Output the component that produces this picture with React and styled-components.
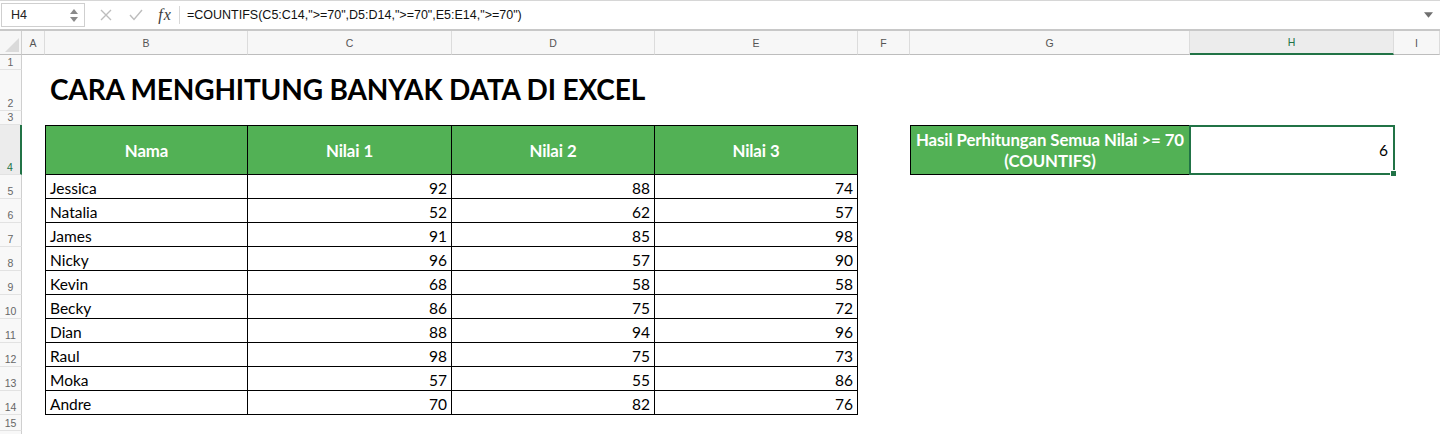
import React from 'react';
import styled, { createGlobalStyle, css } from 'styled-components';

const Global = createGlobalStyle`
  html, body { margin: 0; padding: 0; background: #fff; }
  body { font-family: Lato, "Open Sans", sans-serif; overflow: hidden; }
  #root { width: 1440px; height: 434px; }
`;

const GREEN = '#52b155';
const XL = '#217346';

const Window = styled.div`
  width: 1440px;
  height: 434px;
  overflow: hidden;
  display: flex;
  flex-direction: column;
  background: #fff;
`;

const FormulaBar = styled.div`
  height: 28px;
  flex: none;
  display: flex;
  align-items: center;
  border-top: 1px solid #d6d6d6;
  background: #fff;
  font-family: "Liberation Sans", Arial, sans-serif;
`;

const NameBox = styled.div`
  width: 84px;
  height: 24px;
  margin-left: 1px;
  box-sizing: border-box;
  border: 1px solid #cfcfcf;
  display: flex;
  align-items: center;
  justify-content: space-between;
  padding: 0 6px 0 9px;
  font-size: 12.5px;
  color: #222;
`;

const Spinner = styled.div`
  display: flex;
  flex-direction: column;
  gap: 3px;
`;

const IconBtn = styled.div`
  width: 30px;
  display: flex;
  justify-content: center;
  align-items: center;
  margin-left: ${(p) => p.$gap || 0}px;
`;

const Fx = styled.span`
  font-family: "Liberation Serif", "DejaVu Serif", serif;
  font-style: italic;
  font-size: 16px;
  color: #3c3c3c;
  width: 28px;
  text-align: center;
  letter-spacing: 1px;
`;

const VSep = styled.div`
  width: 1px;
  height: 18px;
  background: #d8d8d8;
  margin: 0 7px 0 0;
`;

const FormulaText = styled.div`
  flex: 1;
  font-size: 12.5px;
  color: #111;
  white-space: nowrap;
`;

const DropArrow = styled.div`
  width: 24px;
  display: flex;
  justify-content: center;
`;

const DoubleRule = styled.div`
  height: 0;
  flex: none;
  border-top: 1px solid #c8c8c8;
  border-bottom: 1px solid #c8c8c8;
`;

const Sheet = styled.div`
  display: grid;
  grid-template-columns: 22px 23px 203px 204px 203px 203px 52px 280px 204px 1fr;
  grid-template-rows: 24px 15px 41px 14px 50px repeat(10, 24px) 16px 24px;
  font-family: Lato, "Open Sans", sans-serif;
`;

const Corner = styled.div`
  background: #f6f6f6;
  border-right: 1px solid #cfcfcf;
  border-bottom: 1px solid #bdbdbd;
  position: relative;
  overflow: hidden;
  &::after {
    content: '';
    position: absolute;
    right: 2px;
    bottom: 2px;
    width: 0;
    height: 0;
    border-left: 14px solid transparent;
    border-bottom: 14px solid #dadada;
  }
`;

const ColHead = styled.div`
  box-sizing: border-box;
  display: flex;
  align-items: center;
  justify-content: center;
  font-family: "Liberation Sans", Arial, sans-serif;
  font-size: 10.5px;
  color: #555;
  background: #f7f7f7;
  border-right: 1px solid #dcdcdc;
  border-bottom: 1px solid #bdbdbd;
  ${(p) =>
    p.$active &&
    css`
      background: #ececec;
      color: ${XL};
      border-bottom: 2px solid ${XL};
    `}
`;

const RowHead = styled.div`
  box-sizing: border-box;
  display: flex;
  align-items: flex-end;
  justify-content: center;
  padding-bottom: 1px;
  font-family: "Liberation Sans", Arial, sans-serif;
  font-size: 10.5px;
  color: #666;
  background: #f8f8f8;
  border-right: 1px solid #cfcfcf;
  border-bottom: 1px solid #e2e2e2;
  ${(p) =>
    p.$active &&
    css`
      background: #ececec;
      color: ${XL};
      border-right: 2px solid ${XL};
    `}
`;

const Cell = styled.div`
  box-sizing: border-box;
  position: relative;
  display: flex;
  align-items: flex-end;
  padding: 0 4px 1px 4px;
  font-size: 15.5px;
  color: #000;
  white-space: nowrap;
  justify-content: ${(p) => (p.$align === 'right' ? 'flex-end' : p.$align === 'center' ? 'center' : 'flex-start')};
  ${(p) =>
    p.$boxed &&
    css`
      border-right: 1px solid #000;
      border-bottom: 1px solid #000;
    `}
  ${(p) => p.$left && css`border-left: 1px solid #000;`}
  ${(p) => p.$top && css`border-top: 1px solid #000;`}
  ${(p) =>
    p.$fill &&
    css`
      background: ${GREEN};
      color: #fff;
      font-weight: 700;
      align-items: center;
      justify-content: center;
      text-align: center;
      white-space: normal;
      font-size: 16.8px;
      line-height: 21px;
      padding: 0 1px;
      letter-spacing: -0.1px;
    `}
`;

const Title = styled.span`
  font-size: 28px;
  font-weight: 700;
  padding-left: 1px;
  padding-bottom: 4px;
  position: relative;
  z-index: 1;
  letter-spacing: -0.15px;
`;

const Selection = styled.div`
  position: absolute;
  inset: -1px -2px -1px -1px;
  border: 2px solid ${XL};
  pointer-events: none;
  &::after {
    content: '';
    position: absolute;
    right: -4px;
    bottom: -4px;
    width: 5px;
    height: 5px;
    background: ${XL};
    border: 1px solid #fff;
  }
`;

const Result = styled.span`
  padding-bottom: 14px;
  padding-right: 1px;
`;

const COLS = ['A', 'B', 'C', 'D', 'E', 'F', 'G', 'H', 'I'];

const DATA = [
  ['Jessica', 92, 88, 74],
  ['Natalia', 52, 62, 57],
  ['James', 91, 85, 98],
  ['Nicky', 96, 57, 90],
  ['Kevin', 68, 58, 58],
  ['Becky', 86, 75, 72],
  ['Dian', 88, 94, 96],
  ['Raul', 98, 75, 73],
  ['Moka', 57, 55, 86],
  ['Andre', 70, 82, 76],
];

const LABELS = ['Nama', 'Nilai 1', 'Nilai 2', 'Nilai 3'];

function renderRow(r) {
  const cells = [];
  const isHeader = r === 4;
  const dataRow = r >= 5 && r <= 14 ? DATA[r - 5] : null;
  COLS.forEach((c, ci) => {
    const key = `${c}${r}`;
    if (r === 2 && c === 'B') {
      cells.push(
        <Cell key={key}>
          <Title>CARA MENGHITUNG BANYAK DATA DI EXCEL</Title>
        </Cell>
      );
      return;
    }
    if ((isHeader || dataRow) && ci >= 1 && ci <= 4) {
      const content = isHeader ? LABELS[ci - 1] : dataRow[ci - 1];
      cells.push(
        <Cell
          key={key}
          $boxed
          $left={ci === 1}
          $top={isHeader}
          $fill={isHeader}
          $align={ci === 1 ? 'left' : 'right'}
        >
          {content}
        </Cell>
      );
      return;
    }
    if (isHeader && c === 'G') {
      cells.push(
        <Cell key={key} $boxed $left $top $fill>
          Hasil Perhitungan Semua Nilai &gt;= 70 (COUNTIFS)
        </Cell>
      );
      return;
    }
    if (isHeader && c === 'H') {
      cells.push(
        <Cell key={key} $boxed $top $align="right">
          <Result>6</Result>
          <Selection />
        </Cell>
      );
      return;
    }
    cells.push(<Cell key={key} />);
  });
  return cells;
}

const Tri = ({ dir = 'up', color = '#8a8a8a', w = 8, h = 5 }) => (
  <svg width={w} height={h} viewBox="0 0 8 5">
    {dir === 'up' ? (
      <path d="M4 0 L8 5 L0 5 Z" fill={color} />
    ) : (
      <path d="M0 0 L8 0 L4 5 Z" fill={color} />
    )}
  </svg>
);

export default function App() {
  const rows = [];
  for (let r = 1; r <= 16; r++) {
    rows.push(
      <React.Fragment key={r}>
        <RowHead $active={r === 4}>{r <= 15 ? r : ''}</RowHead>
        {renderRow(r)}
      </React.Fragment>
    );
  }
  return (
    <Window>
      <Global />
      <FormulaBar>
        <NameBox>
          <span>H4</span>
          <Spinner>
            <Tri dir="up" />
            <Tri dir="down" />
          </Spinner>
        </NameBox>
        <IconBtn $gap={6}>
          <svg width="12" height="12" viewBox="0 0 12 12">
            <path d="M1 1 L11 11 M11 1 L1 11" stroke="#bdbdbd" strokeWidth="1.4" fill="none" />
          </svg>
        </IconBtn>
        <IconBtn>
          <svg width="14" height="12" viewBox="0 0 14 12">
            <path d="M1 6 L5 10.5 L13 1" stroke="#bdbdbd" strokeWidth="1.4" fill="none" />
          </svg>
        </IconBtn>
        <Fx>fx</Fx>
        <VSep />
        <FormulaText>=COUNTIFS(C5:C14,"&gt;=70",D5:D14,"&gt;=70",E5:E14,"&gt;=70")</FormulaText>
        <DropArrow>
          <Tri dir="down" color="#6f6f6f" w={9} h={6} />
        </DropArrow>
      </FormulaBar>
      <DoubleRule />
      <Sheet>
        <Corner />
        {COLS.map((c) => (
          <ColHead key={c} $active={c === 'H'}>
            {c}
          </ColHead>
        ))}
        {rows}
      </Sheet>
    </Window>
  );
}
